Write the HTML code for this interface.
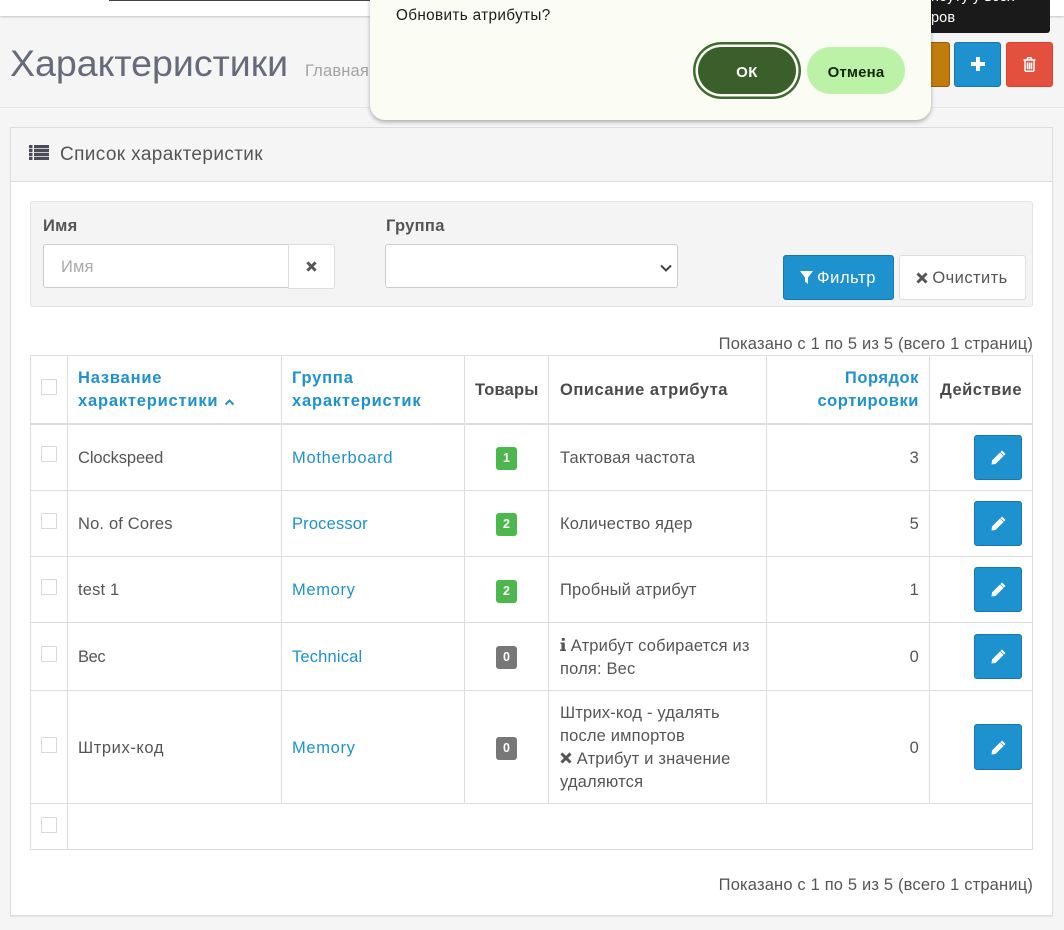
<!DOCTYPE html>
<html lang="ru"><head><meta charset="utf-8"><title>Характеристики</title>
<style>
*{box-sizing:border-box}
html,body{margin:0;padding:0;background:#f5f5f5}
body{font:16.5px/23px "Liberation Sans",sans-serif;color:#555;letter-spacing:.17px}
#p{position:relative;width:1064px;height:930px;overflow:hidden;background:#f5f5f5}
.a{position:absolute}
a{color:#1e91cf;text-decoration:none}
.top{left:0;top:0;width:1064px;height:16px;background:#fff;box-shadow:0 1px 2px rgba(0,0,0,.2)}
.tline{left:109px;top:0;width:262px;height:1px;background:#444}
.tip{left:900px;top:-10px;width:150px;height:43px;background:#1a1a1a;border-radius:3px;color:#fff;font-size:14.5px;line-height:24px;padding-left:31px;white-space:nowrap;letter-spacing:.1px}
h1{position:absolute;left:10px;top:40px;margin:0;font-weight:400;font-size:37.5px;line-height:46px;color:#666b7a;letter-spacing:0;white-space:nowrap}
.crumb{left:305px;top:59px;color:#a3a3a3}
.hr{left:0;top:107px;width:1064px;height:1px;background:#e8e8e8}
.btn{position:absolute;border-radius:3px;border:1px solid;display:flex;align-items:center;justify-content:center}
.panel{left:10px;top:127px;width:1043px;height:789px;background:#fff;border:1px solid #ddd;box-shadow:0 1px 1px rgba(0,0,0,.08)}
.phead{left:10px;top:127px;width:1043px;height:55px;background:#f5f5f5;border:1px solid #ddd}
.ptitle{left:60px;top:143px;font-size:19px;color:#555;letter-spacing:.38px;white-space:nowrap}
.well{left:30px;top:201px;width:1003px;height:106px;background:#f4f4f4;border:1px solid #e3e3e3;border-radius:3px}
label{position:absolute;font-weight:700;top:215px;color:#555;letter-spacing:.3px}
input.t{position:absolute;left:43px;top:244px;width:246px;height:44px;border:1px solid #ccc;border-radius:3px 0 0 3px;padding:2px 17px 0;font:16.5px "Liberation Sans",sans-serif;letter-spacing:.17px;background:#fff;color:#555}
input.t::placeholder{color:#aaa;opacity:1}
.add{left:288px;top:244px;width:47px;height:45px;background:#fff;border:1px solid #ddd;border-radius:0 3px 3px 0;display:flex;align-items:center;justify-content:center}
select{position:absolute;left:385px;top:244px;width:293px;height:44px;border:1px solid #ccc;border-radius:3px;background:#fff;font:16px "Liberation Sans",sans-serif;appearance:none;-webkit-appearance:none}
.info{right:31px;white-space:nowrap;letter-spacing:.17px}
table{position:absolute;left:30px;top:355px;width:1002px;table-layout:fixed;border-collapse:collapse;background:#fff}
td,th{border:1px solid #ddd;padding:2px 10px 0;vertical-align:middle;text-align:left}
td:nth-child(5),th:nth-child(5){padding-left:11px}
th{font-weight:700;color:#4a4a4a;border-bottom:2px solid #ddd;letter-spacing:.5px}
th a{color:#1e91cf;letter-spacing:.8px}
th.r a{letter-spacing:.55px}
.r{text-align:right}.c{text-align:center}
input.k{appearance:none;-webkit-appearance:none;display:block;position:relative;top:-3px;width:16px;height:16px;margin:0;border:1px solid #d8d8d8;border-radius:1px;background:#fff}
tr:nth-child(n+2):nth-child(-n+5) input.k{top:-4px}
td.k,th.k{padding:2px 0 0 10px}
.badge{display:inline-block;position:relative;top:0;width:21px;height:23px;border-radius:3px;color:#fff;font-weight:700;font-size:12.5px;line-height:23px;text-align:center;letter-spacing:0;vertical-align:middle}
.g{background:#4cb74c}.d{background:#777}
.e{position:relative;top:-1px;display:flex;align-items:center;justify-content:center;width:48px;height:45px;margin-left:34px;background:#1e91cf;border:1px solid #1978ab;border-radius:3px}
.dlg{left:370px;top:-20px;width:561px;height:140px;background:#fbfcf3;border-radius:0 0 15px 15px;box-shadow:0 2px 4px rgba(0,0,0,.3)}
.q{left:396px;top:4px;color:#1c1c1c;font-size:15.3px;letter-spacing:.35px;white-space:nowrap}
.ok,.no{position:absolute;top:47px;height:47px;border-radius:24px;font-weight:700;font-size:15px;letter-spacing:.15px;display:flex;align-items:center;justify-content:center;padding-top:4px}
.ok{left:698px;width:98px;background:#3a5f2b;color:#fff;box-shadow:0 0 0 2.5px #fbfcf3,0 0 0 5px #3f6a33;letter-spacing:.5px}
.no{left:807px;width:98px;background:#bcf2a8;color:#122a0c}
</style></head><body><div id="p">
<div class="a top"></div><div class="a tline"></div>
<div class="a tip"><div style="height:14px;line-height:10px;margin-top:2px">ноуту у всех</div><div style="margin-top:0">ров</div></div>
<h1>Характеристики</h1>
<div class="a crumb" style="top:60px">Главная</div>
<div class="a hr"></div>
<div class="btn" style="left:900px;top:42px;width:50px;height:45px;background:#c27c0e;border-color:#8f5c0b"></div>
<div class="btn" style="left:954px;top:42px;width:47px;height:45px;background:#1e91cf;border-color:#1978ab"><svg style="margin-top:-2px" width="14" height="14" viewBox="0 0 14 14"><path d="M5 0h4v5h5v4H9v5H5V9H0V5h5z" fill="#fff"/></svg></div>
<div class="btn" style="left:1006px;top:42px;width:47px;height:45px;background:#e3503e;border-color:#e2402e"><svg style="margin-top:-1px" width="13" height="15" viewBox="0 0 13 15"><path d="M4 2.500l1-1.700h3l1 1.700M.5 3h12M2 3.500v10l1 .8h7l1-.8v-10M4.500 5.500v6.800M6.500 5.500v6.800M8.500 5.500v6.800" fill="none" stroke="#fff" stroke-width="1.500"/></svg></div>
<div class="a panel"></div><div class="a phead"></div>
<svg class="a" style="left:29px;top:145px" width="20" height="15" viewBox="0 0 20 15"><path d="M0 0h3.500v3.300H0zM5 0h15v3.300H5zM0 4h3.500v3.300H0zM5 4h15v3.300H5zM0 8h3.500v3.300H0zM5 8h15v3.300H5zM0 12h3.500v3H0zM5 12h15v3H5z" fill="#4b4b57"/></svg>
<div class="a ptitle">Список характеристик</div>
<div class="a well"></div>
<label style="left:43px">Имя</label>
<input class="t" placeholder="Имя">
<div class="a add"><svg width="11" height="11" viewBox="0 0 12 12"><path d="M1.500 1.500l9 9M10.500 1.500l-9 9" stroke="#555" stroke-width="3.200" fill="none"/></svg></div>
<label style="left:386px">Группа</label>
<select><option></option></select>
<svg class="a" style="left:660px;top:264px" width="12" height="8" viewBox="0 0 12 8"><path d="M1 1.500l5 5 5-5" stroke="#444" stroke-width="2" fill="none"/></svg>
<div class="btn" style="left:783px;top:255px;width:111px;height:45px;background:#1e91cf;border-color:#1978ab;color:#fff;white-space:nowrap;padding-top:2px;letter-spacing:.6px"><svg width="13" height="13" viewBox="0 0 13 13" style="margin:-2px 4px 0 -1px"><path d="M0 0h13L8 6.500V13L5 10.500v-4z" fill="#fff"/></svg>Фильтр</div>
<div class="btn" style="left:899px;top:255px;width:127px;height:45px;background:#fff;border-color:#ddd;white-space:nowrap;padding-top:2px;letter-spacing:.42px"><svg width="12" height="12" viewBox="0 0 12 12" style="margin:-2px 4px 0 -1px"><path d="M1.500 1.500l9 9M10.500 1.500l-9 9" stroke="#555" stroke-width="3" fill="none"/></svg>Очистить</div>
<div class="a info" style="top:333px">Показано с 1 по 5 из 5 (всего 1 страниц)</div>
<table>
<colgroup><col style="width:37px"><col style="width:214px"><col style="width:183px"><col style="width:84px"><col style="width:218px"><col style="width:163px"><col style="width:103px"></colgroup>
<tr style="height:68px"><th class="k"><input class="k" type="checkbox"></th><th><a>Название характеристики <svg width="11" height="7" viewBox="0 0 11 7"><path d="M1.500 5.500l4-4 4 4" stroke="#1e91cf" stroke-width="2" fill="none"/></svg></a></th><th><a>Группа<br>характеристик</a></th><th style="letter-spacing:.2px">Товары</th><th>Описание атрибута</th><th class="r"><a>Порядок<br>сортировки</a></th><th>Действие</th></tr>
<tr style="height:67px"><td class="k"><input class="k" type="checkbox"></td><td style="letter-spacing:-.1px">Clockspeed</td><td><a style="letter-spacing:.7px">Motherboard</a></td><td class="c"><span class="badge g">1</span></td><td>Тактовая частота</td><td class="r">3</td><td><a class="e"><svg width="15" height="15" viewBox="0 0 15 15"><path d="M11 .5L14.500 4l-10 10-4 .5.500-4z" fill="#fff"/><path d="M9.300 2.200l3.500 3.500" stroke="#1e91cf" stroke-width=".7"/></svg></a></td></tr>
<tr style="height:66px"><td class="k"><input class="k" type="checkbox"></td><td>No. of Cores</td><td><a>Processor</a></td><td class="c"><span class="badge g">2</span></td><td>Количество ядер</td><td class="r">5</td><td><a class="e"><svg width="15" height="15" viewBox="0 0 15 15"><path d="M11 .5L14.500 4l-10 10-4 .5.500-4z" fill="#fff"/><path d="M9.300 2.200l3.500 3.500" stroke="#1e91cf" stroke-width=".7"/></svg></a></td></tr>
<tr style="height:66px"><td class="k"><input class="k" type="checkbox"></td><td>test 1</td><td><a style="letter-spacing:.65px">Memory</a></td><td class="c"><span class="badge g" style="top:1px">2</span></td><td>Пробный атрибут</td><td class="r">1</td><td><a class="e"><svg width="15" height="15" viewBox="0 0 15 15"><path d="M11 .5L14.500 4l-10 10-4 .5.500-4z" fill="#fff"/><path d="M9.300 2.200l3.500 3.500" stroke="#1e91cf" stroke-width=".7"/></svg></a></td></tr>
<tr style="height:68px"><td class="k"><input class="k" type="checkbox"></td><td style="letter-spacing:-.4px">Вес</td><td><a>Technical</a></td><td class="c"><span class="badge d">0</span></td><td><svg width="6" height="13" viewBox="0 0 6 13"><path d="M1.800 0h3v2.800h-3zM.5 4.500h4.300v7H6V13H0v-1.500h1.500V6H.5z" fill="#555"/></svg> Атрибут собирается из поля: Вес</td><td class="r">0</td><td><a class="e"><svg width="15" height="15" viewBox="0 0 15 15"><path d="M11 .5L14.500 4l-10 10-4 .5.500-4z" fill="#fff"/><path d="M9.300 2.200l3.500 3.500" stroke="#1e91cf" stroke-width=".7"/></svg></a></td></tr>
<tr style="height:113px"><td class="k"><input class="k" type="checkbox"></td><td style="letter-spacing:.6px">Штрих-код</td><td><a style="letter-spacing:.65px">Memory</a></td><td class="c"><span class="badge d">0</span></td><td>Штрих-код - удалять после импортов<br><svg width="12" height="12" viewBox="0 0 12 12"><path d="M1.500 1.500l9 9M10.500 1.500l-9 9" stroke="#555" stroke-width="3" fill="none"/></svg> Атрибут и значение удаляются</td><td class="r">0</td><td><a class="e" style="height:46px"><svg width="15" height="15" viewBox="0 0 15 15"><path d="M11 .5L14.500 4l-10 10-4 .5.500-4z" fill="#fff"/><path d="M9.300 2.200l3.500 3.500" stroke="#1e91cf" stroke-width=".7"/></svg></a></td></tr>
<tr style="height:46px"><td class="k"><input class="k" type="checkbox"></td><td colspan="6"></td></tr>
</table>
<div class="a info" style="top:874px">Показано с 1 по 5 из 5 (всего 1 страниц)</div>
<div class="a dlg"></div>
<div class="a q">Обновить атрибуты?</div>
<div class="ok">ОК</div>
<div class="no">Отмена</div>
</div></body></html>
